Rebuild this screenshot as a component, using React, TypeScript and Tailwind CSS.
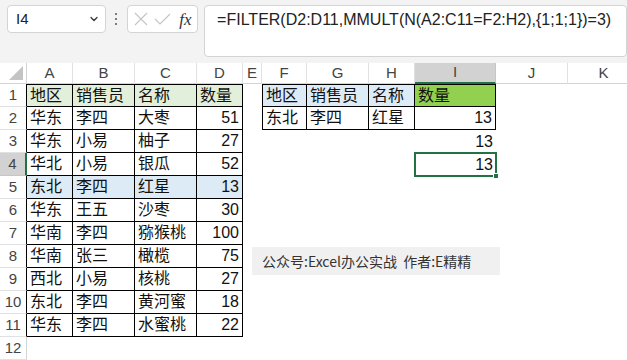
import { ChevronDown } from 'lucide-react';

const letters = ['A', 'B', 'C', 'D', 'E', 'F', 'G', 'H', 'I', 'J', 'K'];

type Val = string | number | null;

// A1:D11 source data
const source: Val[][] = [
  ['地区', '销售员', '名称', '数量'],
  ['华东', '李四', '大枣', 51],
  ['华东', '小易', '柚子', 27],
  ['华北', '小易', '银瓜', 52],
  ['东北', '李四', '红星', 13],
  ['华东', '王五', '沙枣', 30],
  ['华南', '李四', '猕猴桃', 100],
  ['华南', '张三', '橄榄', 75],
  ['西北', '小易', '核桃', 27],
  ['东北', '李四', '黄河蜜', 18],
  ['华东', '李四', '水蜜桃', 22],
];

// F1:I4 criteria + result
const lookup: Record<string, Val> = {
  'F1': '地区', 'G1': '销售员', 'H1': '名称', 'I1': '数量',
  'F2': '东北', 'G2': '李四', 'H2': '红星', 'I2': 13,
  'I3': 13, 'I4': 13,
};

function valueAt(r: number, c: number): Val {
  if (r <= 11 && c <= 3) return source[r - 1][c];
  return lookup[letters[c] + r] ?? null;
}

function cellClass(r: number, c: number) {
  const inMain = r <= 11 && c <= 3;
  const inCrit = r <= 2 && c >= 5 && c <= 8;
  const cls: string[] = [];
  if (inMain || inCrit) {
    cls.push('border-r border-b border-black');
    if (r === 1) cls.push('border-t');
    if (c === 5) cls.push('border-l');
  }
  if (inMain && r === 1) cls.push('bg-[#e2efda]');
  if (inMain && r === 5) cls.push('bg-[#ddebf7]');
  if (inCrit && r === 1) cls.push(c === 8 ? 'bg-[#92d050]' : 'bg-[#ddebf7]');
  return cls.join(' ');
}

function RowHeader({ r }: { r: number }) {
  const selected = r === 4;
  const inTable = r <= 11;
  return (
    <div
      className={
        'flex items-center justify-center text-[15px] text-[#444] ' +
        (selected
          ? 'bg-[#d2d2d2] border-r-2 border-[#217346] border-b border-b-[#c6c6c6]'
          : inTable
            ? 'bg-white border-r border-black border-b border-b-[#e1e1e1]'
            : 'bg-white border-r border-[#d4d4d4] border-b border-b-[#e1e1e1]')
      }
    >
      {r}
    </div>
  );
}

export default function App() {
  const rows = Array.from({ length: 12 }, (_, i) => i + 1);

  return (
    <div className="w-[627px] h-[360px] overflow-hidden bg-white font-['Liberation_Sans','Noto_Sans_CJK_SC',sans-serif]">
      {/* Formula bar */}
      <div className="h-[63px] bg-[#f3f3f3] flex items-start pt-[5px] pl-[7px]">
        <div className="w-[100px] h-[28px] bg-white border border-[#d4d4d4] rounded-[4px] flex items-center justify-between pl-[8px] pr-[5px] text-[15px] text-[#222]">
          <span>I4</span>
          <ChevronDown size={12} strokeWidth={2.5} className="text-[#333]" />
        </div>
        <div className="w-[22px] h-[28px] flex flex-col items-center justify-center gap-[3px]">
          <span className="w-[2px] h-[2px] bg-[#555] rounded-full" />
          <span className="w-[2px] h-[2px] bg-[#555] rounded-full" />
          <span className="w-[2px] h-[2px] bg-[#555] rounded-full" />
        </div>
        <div className="w-[72px] h-[28px] bg-white border border-[#d4d4d4] rounded-[4px] flex items-center pl-[6px] gap-[6px]">
          <svg width="14" height="14" viewBox="0 0 14 14" className="text-[#c4c4c4]">
            <path d="M1 1 L13 13 M13 1 L1 13" stroke="currentColor" strokeWidth="1.1" fill="none" />
          </svg>
          <svg width="17" height="12" viewBox="0 0 17 12" className="text-[#c4c4c4]">
            <path d="M1 6 L6 11 L16 1" stroke="currentColor" strokeWidth="1.1" fill="none" />
          </svg>
          <span className="italic font-['Liberation_Serif',serif] text-[17px] text-[#333] leading-none ml-[2px]">fx</span>
        </div>
        <div className="ml-[6px] w-[430px] h-[52px] bg-white border border-[#d4d4d4] rounded-[4px] pl-[12px] pt-[3px] text-[16px] leading-[22px] text-[#222] whitespace-nowrap">
          =FILTER(D2:D11,MMULT(N(A2:C11=F2:H2),{'{'}1;1;1{'}'})=3)
        </div>
      </div>

      {/* Sheet */}
      <div className="relative">
        <div className="grid grid-cols-[27px_46px_62px_62px_46px_19px_45px_62px_46px_81px_72px_72px] grid-rows-[21px_repeat(12,23px)]">
          {/* select-all corner */}
          <div className="relative bg-white border-r border-b border-[#d4d4d4]">
            <svg width="16" height="16" viewBox="0 0 16 16" className="absolute right-[2px] bottom-[2px]">
              <polygon points="1,15 15,15 15,1" fill="#c4c4c4" />
            </svg>
          </div>
          {letters.map((l) => (
            <div
              key={l}
              className={
                'flex items-center justify-center text-[15px] text-[#444] ' +
                (l === 'I'
                  ? 'bg-[#d2d2d2] border-b-2 border-[#217346] border-r border-r-[#c6c6c6]'
                  : 'bg-white border-b border-[#d4d4d4] border-r border-r-[#e1e1e1]')
              }
            >
              {l}
            </div>
          ))}

          {rows.map((r) => (
            <div key={r} className="contents">
              <RowHeader r={r} />
              {letters.map((l, c) => {
                const v = valueAt(r, c);
                const isNum = typeof v === 'number';
                const active = r === 4 && c === 8;
                return (
                  <div
                    key={l}
                    className={
                      'relative flex items-center px-[3px] text-[16px] text-[#111] whitespace-nowrap ' +
                      (isNum ? 'justify-end ' : 'justify-start ') +
                      cellClass(r, c)
                    }
                  >
                    {v}
                    {active && (
                      <div className="absolute -left-[1px] -top-[1px] -right-[1px] -bottom-[1px] border-2 border-[#217346]">
                        <div className="absolute -right-[4px] -bottom-[4px] w-[6px] h-[6px] bg-[#217346] border border-white" />
                      </div>
                    )}
                  </div>
                );
              })}
            </div>
          ))}
        </div>

        {/* floating text box */}
        <div className="absolute left-[252px] top-[184px] w-[248px] h-[28px] bg-[#f0f0f0] flex items-center pl-[10px] text-[14px] text-[#333] font-['Noto_Sans_CJK_SC',sans-serif] whitespace-nowrap">
          公众号:Excel办公实战&nbsp;&nbsp;作者:E精精
        </div>
      </div>
    </div>
  );
}
